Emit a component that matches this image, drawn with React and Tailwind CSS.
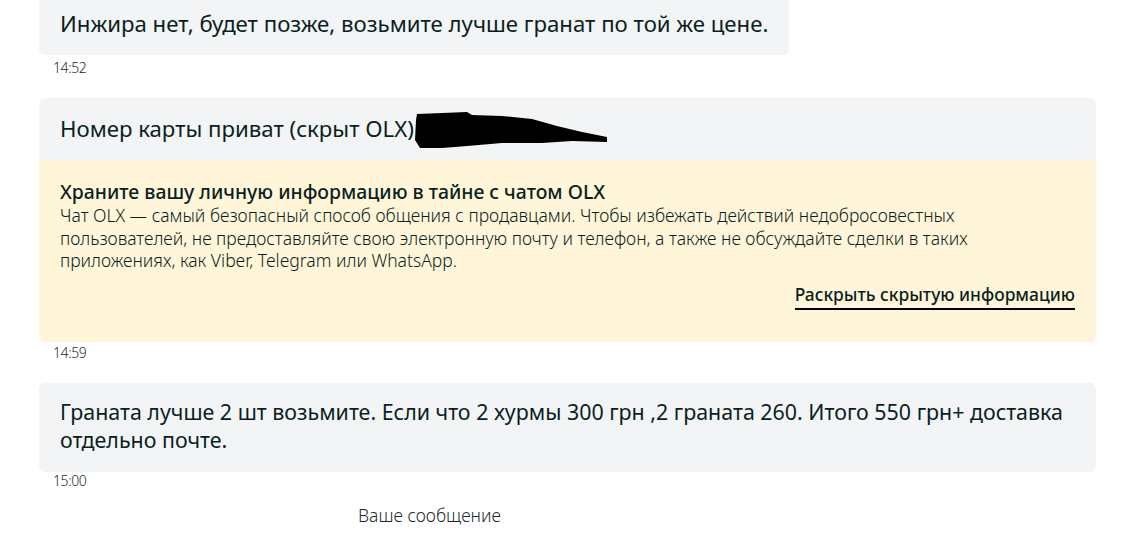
import React from "react";

const Time = ({ children, className = "" }) => (
  <div className={`pl-[14px] text-[14px] leading-4 font-light text-[#1b2b2d] tracking-[-0.4px] ${className}`}>
    {children}
  </div>
);

// черная "замазка" поверх номера карты
const Scribble = () => (
  <svg width="194" height="38" viewBox="0 0 194 38" className="inline-block align-middle ml-[1px] -my-[8px]">
    <path
      d="M2 2 L27 1 L52 0 L57 3 L87 4 L117 7 L142 14 L167 20 L192 25 L192 30 L157 29 L127 31 L87 31 L52 34 L27 36 L5 36 L0 28 L1 8 Z"
      fill="#000"
    />
  </svg>
);

export default function App() {
  return (
    <div className="h-screen bg-white overflow-hidden font-['Noto_Sans',sans-serif] text-[#0a1f22]">
      <div className="pl-[39px] pr-[38px]">
        {/* message 1 */}
        <div className="w-fit -mt-[7px] rounded-[6px] bg-[#f2f4f5] px-[21px] py-4 text-[22.2px] leading-[30px]">
          Инжира нет, будет позже, возьмите лучше гранат по той же цене.
        </div>
        <Time className="mt-[5px]">14:52</Time>

        {/* message 2 */}
        <div className="mt-[22px] rounded-[6px] overflow-hidden">
          <div className="bg-[#f2f4f5] px-[21px] py-4 text-[22.2px] leading-[30px]">
            Номер карты приват (скрыт OLX)
            <Scribble />
          </div>
          <div className="bg-[#fff6d9] px-[21px] pt-5 pb-[32px]">
            <div className="text-[19.4px] leading-6 font-medium whitespace-nowrap">
              Храните вашу личную информацию в тайне с чатом OLX
            </div>
            <p className="text-[17.5px] leading-[22.5px] font-light whitespace-nowrap">
              Чат OLX — самый безопасный способ общения с продавцами. Чтобы избежать действий недобросовестных
              <br />
              пользователей, не предоставляйте свою электронную почту и телефон, а также не обсуждайте сделки в таких
              <br />
              приложениях, как Viber, Telegram или WhatsApp.
            </p>
            <div className="mt-[10px] flex justify-end">
              <span className="border-b-2 border-black pb-[2px] text-[17.4px] leading-6 font-medium">
                Раскрыть скрытую информацию
              </span>
            </div>
          </div>
        </div>
        <Time className="mt-[3px]">14:59</Time>

        {/* message 3 */}
        <div className="mt-[22px] rounded-[6px] bg-[#f2f4f5] px-[21px] pt-[15px] pb-[18px] text-[21.4px] leading-7">
          <div className="whitespace-nowrap">
            Граната лучше 2 шт возьмите. Если что 2 хурмы 300 грн ,2 граната 260. Итого 550 грн+ доставка
          </div>
          <div>отдельно почте.</div>
        </div>
        <Time className="mt-px">15:00</Time>
      </div>

      <div className="mt-[16px] pl-[358px] text-[17.5px] leading-5 font-light text-[#1b2b2d]">
        Ваше сообщение
      </div>
    </div>
  );
}
